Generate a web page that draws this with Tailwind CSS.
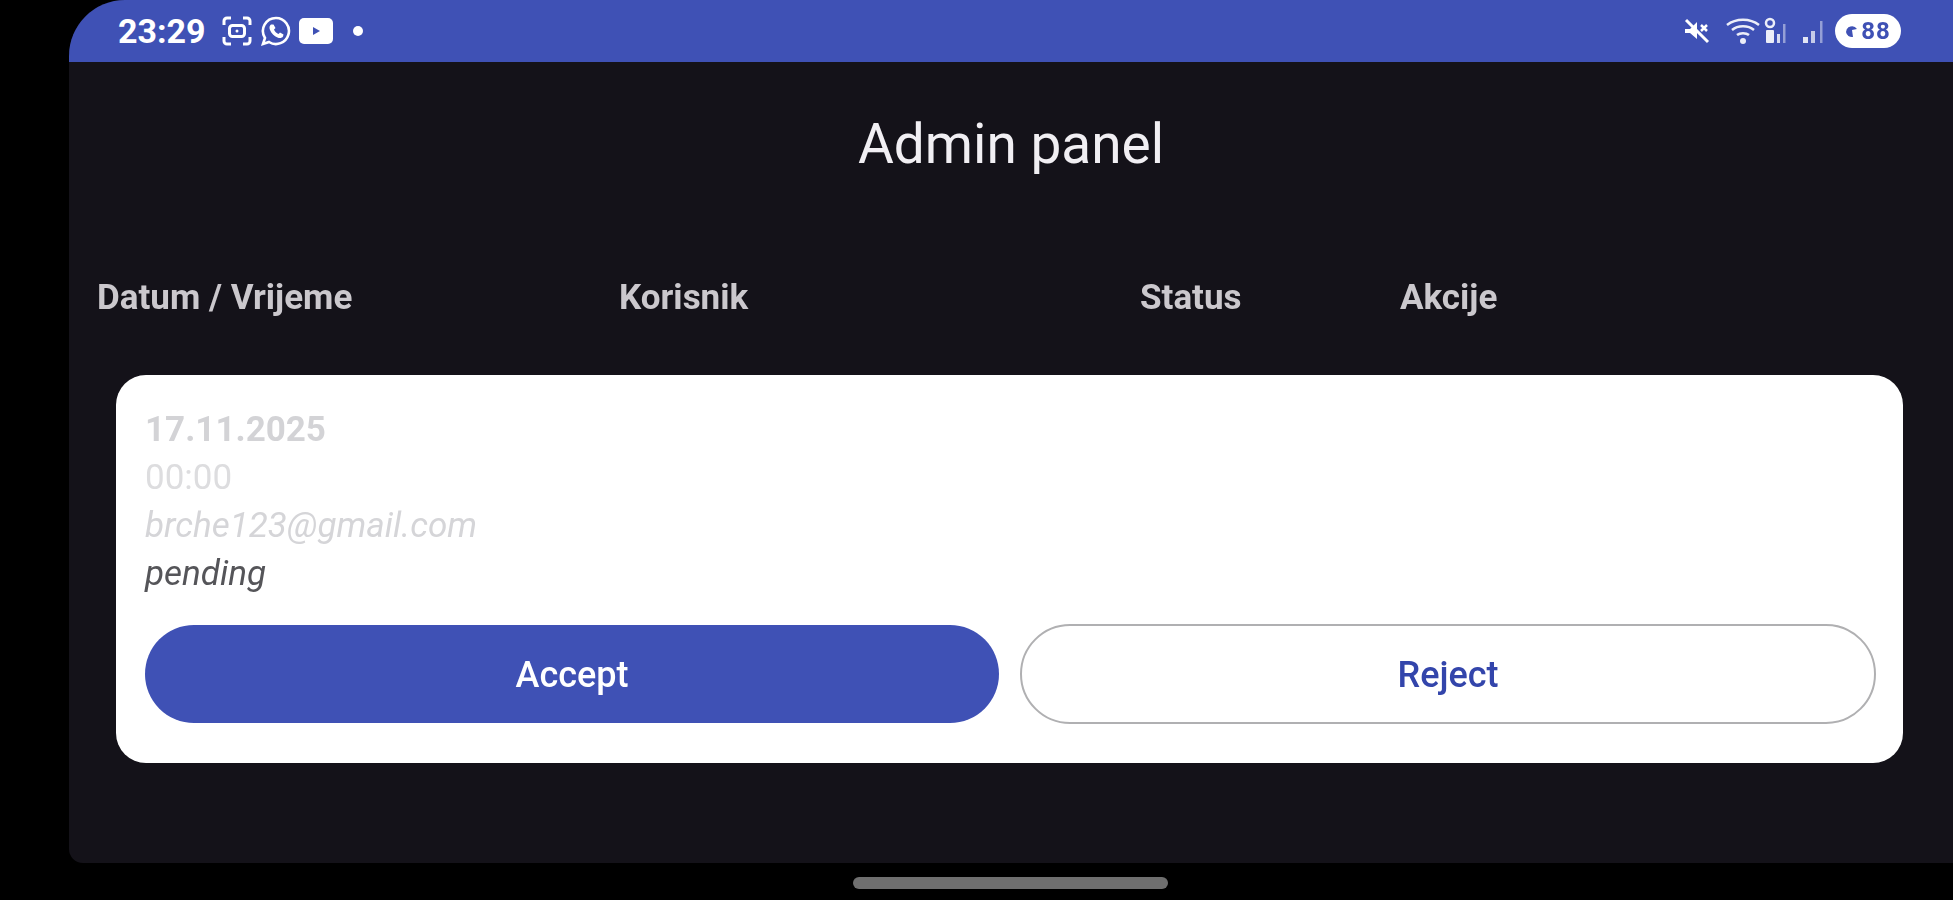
<!DOCTYPE html>
<html lang="en">
<head>
    <meta charset="UTF-8">
    <title>Admin panel</title>
    <script src="https://cdn.jsdelivr.net/npm/@tailwindcss/browser@4"></script>
</head>
<body class="bg-black h-[900px] w-[1953px] overflow-hidden font-['Roboto',sans-serif]">
    <div class="ml-[69px] h-[863px] bg-[#141219] rounded-tl-[56px] rounded-bl-[14px] overflow-hidden flex flex-col blur-[0.6px]">
        <!-- Status bar -->
        <div class="h-[62px] shrink-0 bg-[#3f51b5] flex items-center text-white">
            <span class="ml-[49px] w-[98px] text-[34px] font-bold leading-none">23:29</span>
            <svg class="ml-[5px] w-[32px] h-[32px]" viewBox="0 0 32 32" fill="none" stroke="white" stroke-width="3">
                <path d="M3 10V6a3 3 0 0 1 3-3h4M22 3h4a3 3 0 0 1 3 3v4M29 22v4a3 3 0 0 1-3 3h-4M10 29H6a3 3 0 0 1-3-3v-4"/>
                <rect x="8.5" y="10.5" width="15" height="11" rx="3"/>
                <circle cx="16" cy="16" r="1.5" fill="white" stroke="none"/>
            </svg>
            <svg class="ml-[7px] w-[32px] h-[32px]" viewBox="0 0 32 32" fill="none">
                <path d="M16 3a13 13 0 0 0-11 20l-2 6 6-2A13 13 0 1 0 16 3z" stroke="white" stroke-width="2.6"/>
                <path d="M11 9.500c-1.500 1-2 3-1 5.500 1.500 3.500 4 6 7.500 7.500 2.500 1 4.500.5 5.500-1l.5-2-3.500-2-1.500 1.500c-2-.8-3.700-2.500-4.500-4.500l1.500-1.500-2-3.500z" fill="white"/>
            </svg>
            <svg class="ml-[7px] w-[34px] h-[26px]" viewBox="0 0 34 26">
                <rect width="34" height="26" rx="5" fill="white"/>
                <path d="M14 9l7 4-7 4z" fill="#3f51b5"/>
            </svg>
            <span class="ml-[20px] w-[10px] h-[10px] rounded-full bg-white"></span>
            <div class="ml-auto mr-[52px] flex items-center">
                <svg class="w-[28px] h-[28px]" viewBox="0 0 28 28" fill="white">
                    <path d="M3 12h5l7-7v17l-7-6H3z"/>
                    <path d="M4 3l22 22" stroke="white" stroke-width="3"/>
                    <path d="M19 8l6 6M25 8l-6 6" stroke="white" stroke-width="2.500"/>
                </svg>
                <svg class="ml-[15px] w-[36px] h-[30px]" viewBox="0 0 36 30" fill="none" stroke="white" stroke-width="2.500" opacity="0.9">
                    <path d="M2 9c9-7 23-7 32 0M7 14c6-5 16-5 22 0M12 19c3-2.500 9-2.500 12 0"/>
                    <circle cx="18" cy="25" r="3" fill="white" stroke="none"/>
                </svg>
                <svg class="ml-[2px] w-[28px] h-[30px]" viewBox="0 0 28 30" fill="white">
                    <circle cx="7" cy="7" r="4" fill="none" stroke="white" stroke-width="2.500" opacity="0.9"/>
                    <rect x="3" y="14" width="8" height="13" rx="1" opacity="0.9"/>
                    <rect x="14" y="18" width="3" height="9" opacity="0.8"/>
                    <rect x="20" y="8" width="2.500" height="19" opacity="0.45"/>
                </svg>
                <svg class="ml-[11px] w-[24px] h-[28px]" viewBox="0 0 24 28" fill="white">
                    <rect x="1" y="20" width="5" height="6" opacity="0.85"/>
                    <rect x="9" y="14" width="4" height="12" opacity="0.7"/>
                    <rect x="18" y="4" width="2.500" height="22" opacity="0.45"/>
                </svg>
                <div class="ml-[9px] w-[66px] h-[34px] rounded-full bg-white flex items-center justify-center gap-[3px]">
                    <svg class="w-[13px] h-[13px]" viewBox="0 0 13 13" fill="#3f51b5"><path d="M1 7a6 6 0 0 1 11-3l-5 1 1 7a6 6 0 0 1-7-5z"/></svg>
                    <span class="text-[#3f51b5] text-[24px] font-bold leading-none tracking-[1px]">88</span>
                </div>
            </div>
        </div>

        <!-- Title -->
        <h1 class="mt-[53px] text-center text-[55px] leading-[58px] text-[#f1eff3]">Admin panel</h1>

        <!-- Table header -->
        <div class="mt-[105px] pl-[28px] flex text-[35px] leading-[40px] font-bold text-[#cbc8cd]">
            <span class="w-[522px]">Datum / Vrijeme</span>
            <span class="w-[521px]">Korisnik</span>
            <span class="w-[260px]">Status</span>
            <span>Akcije</span>
        </div>

        <!-- Request card -->
        <div class="mt-[57px] ml-[47px] w-[1787px] h-[388px] bg-white rounded-[30px] px-[29px] pt-[31px]">
            <div class="text-[35px] leading-[48px] font-bold text-[#d3d3d6]">17.11.2025</div>
            <div class="text-[35px] leading-[48px] text-[#dddddf]">00:00</div>
            <div class="text-[35px] leading-[48px] italic text-[#d5d5d8]">brche123@gmail.com</div>
            <div class="text-[35px] leading-[48px] italic text-[#555559]">pending</div>
            <div class="mt-[27px] flex gap-[21px]">
                <button class="shrink-0 w-[854px] h-[98px] pt-[2px] rounded-full bg-[#3f51b5] text-white text-[36px] font-medium">Accept</button>
                <button class="shrink-0 w-[856px] h-[100px] pt-[2px] -mt-[1px] rounded-full bg-white border-2 border-[#b0b0b2] text-[#3345ab] text-[36px] font-medium">Reject</button>
            </div>
        </div>
    </div>

    <!-- Home indicator -->
    <div class="ml-[853px] mt-[14px] w-[315px] h-[12px] rounded-full bg-[#6f6f6f]"></div>
</body>
</html>
